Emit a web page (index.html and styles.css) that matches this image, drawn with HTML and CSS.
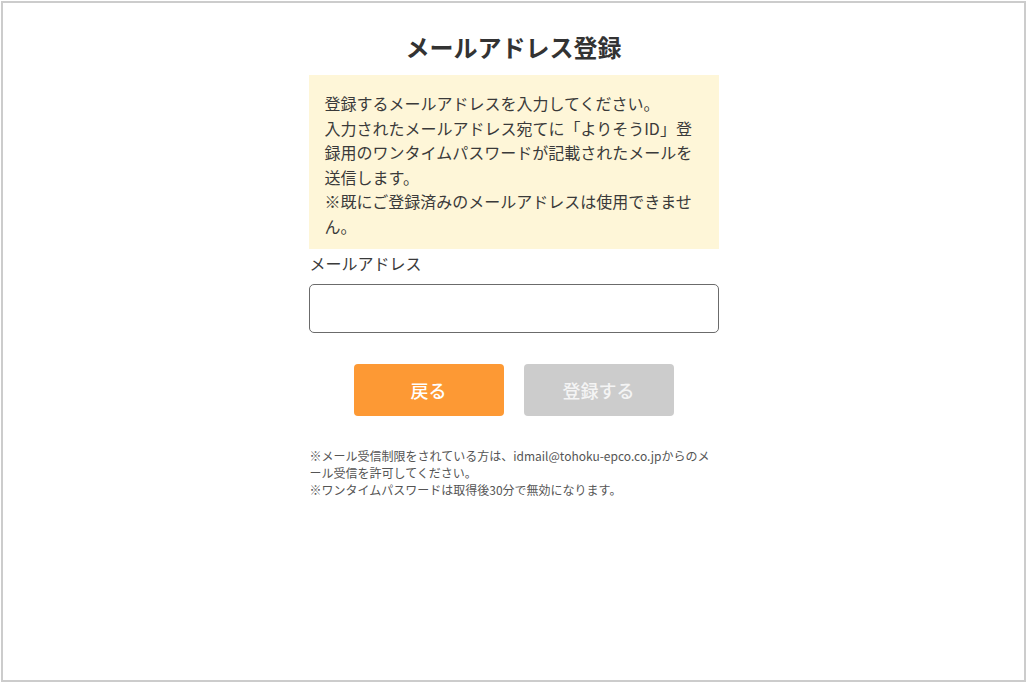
FILE: index.html
```html
<!DOCTYPE html>
<html lang="ja">
<head>
<meta charset="utf-8">
<title>メールアドレス登録</title>
<link rel="stylesheet" href="styles.css">
</head>
<body>
<div class="frame">
  <main class="content">
    <h1 class="title">メールアドレス登録</h1>
    <div class="notice">
      <p>登録するメールアドレスを入力してください。</p>
      <p>入力されたメールアドレス宛てに「よりそうID」登録用のワンタイムパスワードが記載されたメールを送信します。</p>
      <p>※既にご登録済みのメールアドレスは使用できません。</p>
    </div>
    <label class="field-label" for="email">メールアドレス</label>
    <input class="field-input" id="email" type="email">
    <div class="actions">
      <button class="btn btn-back" type="button">戻る</button>
      <button class="btn btn-submit" type="button" disabled>登録する</button>
    </div>
    <div class="notes">
      <p>※メール受信制限をされている方は、idmail@tohoku-epco.co.jpからのメール受信を許可してください。</p>
      <p>※ワンタイムパスワードは取得後30分で無効になります。</p>
    </div>
  </main>
</div>
</body>
</html>
```

FILE: styles.css
```css
* {
  box-sizing: border-box;
}

html, body {
  margin: 0;
  padding: 0;
  background: #ffffff;
}

body {
  font-family: "Noto Sans CJK JP", "Noto Sans", sans-serif;
  color: #333333;
}

.frame {
  margin: 1px 3px 1px 1px;
  height: 681px;
  border: 2px solid #cccccc;
  display: flex;
  justify-content: center;
}

.content {
  width: 410px;
  padding-top: 26px;
  display: flex;
  flex-direction: column;
}

.title {
  margin: 0 0 10px;
  font-size: 24px;
  line-height: 36px;
  font-weight: 700;
  text-align: center;
  color: #333333;
}

.notice {
  background: #fef6d8;
  padding: 16px 16px 11px;
  font-size: 16px;
  line-height: 24.5px;
  color: #3a3a3a;
}

.notice p {
  margin: 0;
}

.field-label {
  margin-top: 2px;
  font-size: 16px;
  line-height: 24px;
  color: #3a3a3a;
  padding-left: 1px;
}

.field-input {
  margin-top: 9px;
  height: 49px;
  width: 100%;
  border: 1px solid #6b6b6b;
  border-radius: 5px;
  background: #ffffff;
  font: inherit;
  padding: 0 12px;
}

.actions {
  margin-top: 31px;
  display: flex;
  justify-content: center;
  gap: 20px;
}

.btn {
  width: 150px;
  height: 52px;
  border: none;
  border-radius: 4px;
  font-family: inherit;
  font-size: 18px;
  font-weight: 500;
  color: #ffffff;
  padding: 0;
}

.btn-back {
  background: #fd9934;
}

.btn-submit {
  background: #cccccc;
  color: #f4f4f4;
}

.notes {
  margin-top: 31px;
  font-size: 12px;
  line-height: 17px;
  color: #555555;
  padding-left: 1px;
}

.notes p {
  margin: 0;
}
```
